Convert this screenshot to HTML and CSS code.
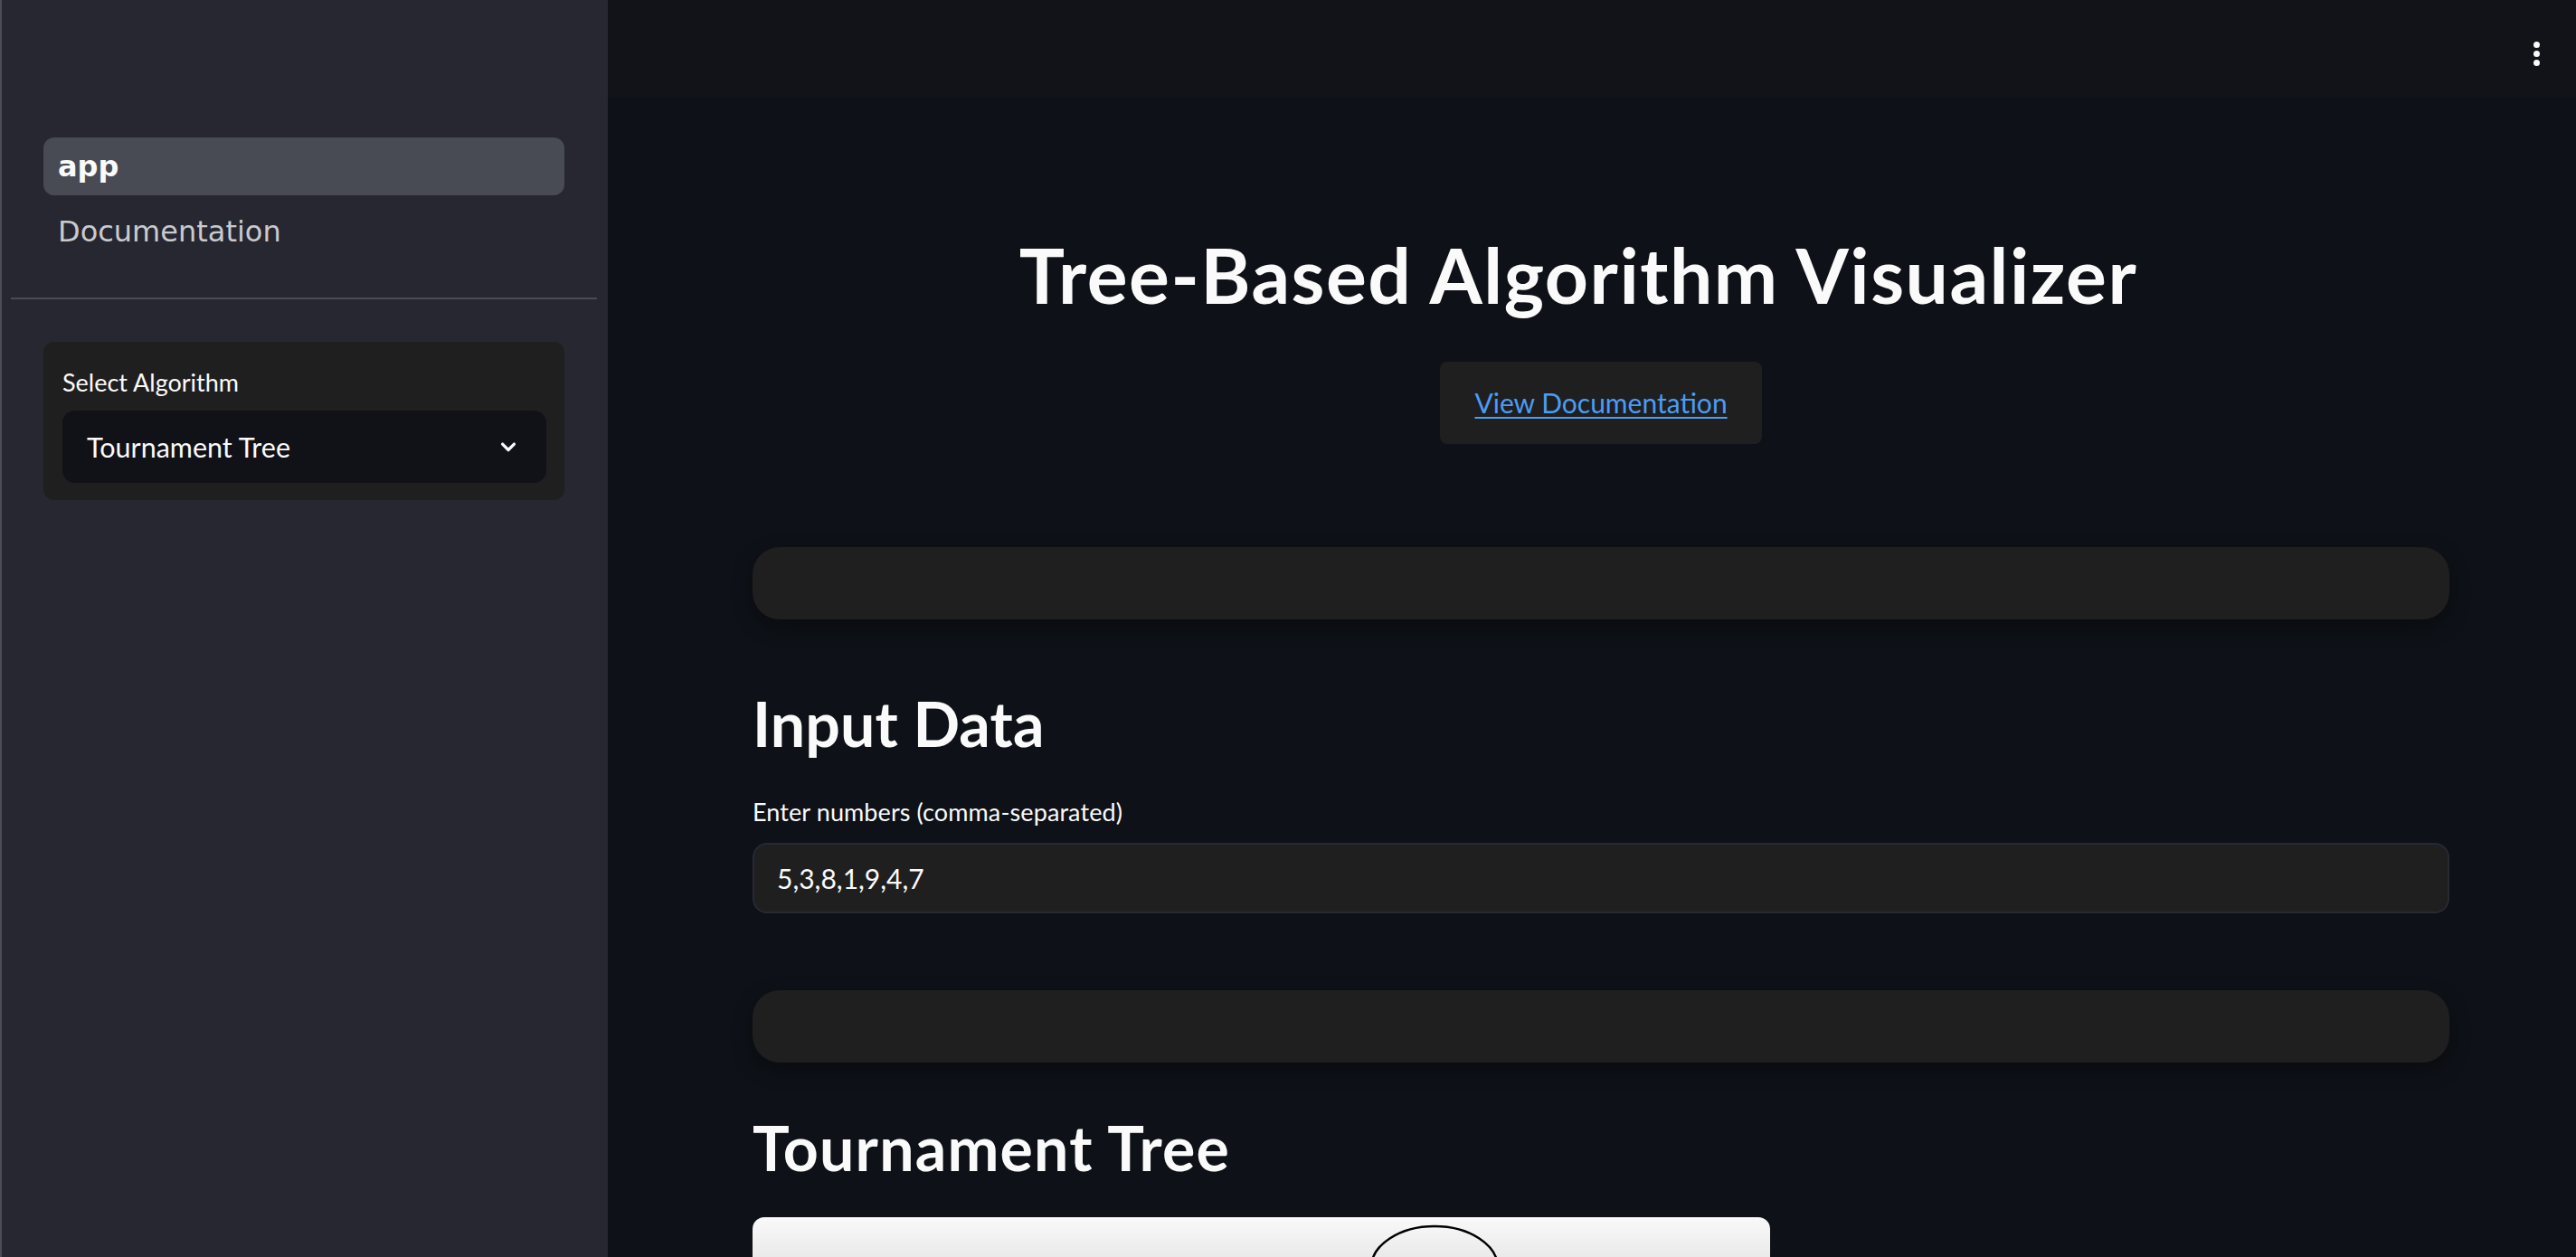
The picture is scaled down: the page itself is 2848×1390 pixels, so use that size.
FILE: index.html
```html
<!DOCTYPE html>
<html lang="en">
<head>
<meta charset="utf-8">
<title>Tree-Based Algorithm Visualizer</title>
<link rel="stylesheet" href="styles.css">
</head>
<body>
<aside class="sidebar">
  <nav class="nav">
    <a class="nav-item active">app</a>
    <a class="nav-item">Documentation</a>
  </nav>
  <hr class="divider">
  <section class="select-card">
    <label class="field-label">Select Algorithm</label>
    <div class="select">
      <span>Tournament Tree</span>
      <svg class="chevron" width="28" height="28" viewBox="0 0 24 24"><path d="M6.5 9.5l5.5 5.5 5.5-5.5" fill="none" stroke="#fafafa" stroke-width="2.8" stroke-linecap="round" stroke-linejoin="round"/></svg>
    </div>
  </section>
</aside>
<main class="main">
  <header class="topbar">
    <div class="kebab"><span></span><span></span><span></span></div>
  </header>
  <div class="content">
    <h1 class="title">Tree-Based Algorithm Visualizer</h1>
    <div class="doc-row"><div class="doc-btn"><a class="doc-link">View Documentation</a></div></div>
    <div class="empty-card"></div>
    <h2 class="section-title first">Input Data</h2>
    <label class="field-label main-label">Enter numbers (comma-separated)</label>
    <div class="text-input">5,3,8,1,9,4,7</div>
    <div class="empty-card second"></div>
    <h2 class="section-title second">Tournament Tree</h2>
    <div class="tree-card">
      <svg class="tree-svg" width="1125" height="500" viewBox="0 0 1125 500">
        <ellipse cx="754" cy="56" rx="70" ry="46" fill="none" stroke="#000" stroke-width="2.5"/>
      </svg>
    </div>
  </div>
</main>
</body>
</html>
```

FILE: styles.css
```css
html, body {
  margin: 0;
  padding: 0;
  height: 100%;
}
body {
  display: flex;
  height: 1390px;
  overflow: hidden;
  background: #0e1117;
  font-family: "Lato", "Noto Sans", sans-serif;
  color: #fafafa;
}
.sidebar {
  width: 672px;
  flex: 0 0 672px;
  box-sizing: border-box;
  background: #262730;
  border-left: 2px solid #4b4c56;
  padding: 152px 12px 0 10px;
  display: flex;
  flex-direction: column;
}
.nav {
  display: flex;
  flex-direction: column;
  gap: 8px;
  margin: 0 36px;
}
.nav-item {
  display: block;
  height: 64px;
  line-height: 64px;
  padding-left: 16px;
  border-radius: 12px;
  font-family: "DejaVu Sans", "Inter", sans-serif;
  font-size: 32px;
  color: #c9cacf;
}
.nav-item.active {
  background: #484a54;
  color: #fafafa;
  font-weight: 700;
}
.divider {
  margin: 41px 0 0 0;
  border: 0;
  height: 2px;
  background: #4a4b55;
}
.select-card {
  margin: 47px 36px 0;
  background: #1f1f1f;
  border-radius: 12px;
  padding: 25px 20px 19px 21px;
  display: flex;
  flex-direction: column;
}
.field-label {
  display: block;
  font-size: 27px;
  line-height: 40px;
  color: #fafafa;
}
.select {
  margin-top: 11px;
  height: 80px;
  box-sizing: border-box;
  background: #111218;
  border-radius: 14px;
  padding: 0 28px 0 27px;
  display: flex;
  align-items: center;
  justify-content: space-between;
  font-size: 30.5px;
  line-height: 80px;
}
.chevron {
  display: block;
}
.main {
  flex: 1;
  display: flex;
  flex-direction: column;
  min-width: 0;
}
.topbar {
  height: 107px;
  flex: 0 0 107px;
  background: #121318;
  display: flex;
  justify-content: flex-end;
  align-items: flex-start;
  padding: 46px 40px 0 0;
  box-sizing: border-box;
}
.kebab {
  display: flex;
  flex-direction: column;
  gap: 3px;
}
.kebab span {
  width: 7px;
  height: 7px;
  border-radius: 50%;
  background: #fafafa;
}
.content {
  padding: 0 140px 0 160px;
  display: flex;
  flex-direction: column;
}
.title {
  margin: 147px 0 0 0;
  padding-right: 50px;
  text-align: center;
  font-size: 84px;
  line-height: 100px;
  font-weight: 700;
  color: #fafafa;
  letter-spacing: 1.5px;
}
.doc-row {
  display: flex;
  justify-content: center;
  margin-top: 46px;
}
.doc-btn {
  height: 91px;
  width: 356px;
  box-sizing: border-box;
  background: #1f1f1f;
  border-radius: 8px;
  display: flex;
  justify-content: center;
  font-size: 30px;
  line-height: 91px;
}
.doc-link {
  color: #4b9cf5;
  text-decoration: underline;
  text-decoration-thickness: 2px;
  text-underline-offset: 4px;
}
.empty-card {
  margin-top: 114px;
  height: 80px;
  background: #1f1f1f;
  border-radius: 30px;
  box-shadow: 0 8px 22px rgba(0, 0, 0, 0.35);
}
.empty-card.second {
  margin-top: 85px;
}
.section-title {
  margin: 70px 0 0 0;
  font-size: 68px;
  line-height: 90px;
  font-weight: 700;
  color: #fafafa;
  letter-spacing: 0.1px;
}
.section-title.second {
  margin-top: 49px;
  letter-spacing: 1.2px;
}
.main-label {
  margin-top: 33px;
  letter-spacing: 0.1px;
}
.text-input {
  margin-top: 14px;
  height: 78px;
  box-sizing: border-box;
  border: 2px solid #272934;
  border-radius: 16px;
  background: #1f1f1f;
  padding-left: 25px;
  font-size: 30px;
  line-height: 74px;
  color: #fafafa;
}
.tree-card {
  margin-top: 32px;
  width: 1125px;
  height: 500px;
  border-radius: 13px;
  background: linear-gradient(#f9f9f9 0, #e1e1e1 70px, #e4e4e4 100%);
  overflow: hidden;
}
.tree-svg {
  display: block;
}
```
